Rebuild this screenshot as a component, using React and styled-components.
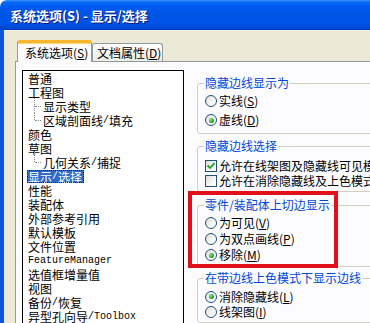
import React from "react";
import styled, { createGlobalStyle, css } from "styled-components";

const GlobalStyle = createGlobalStyle`
  html, body { margin: 0; padding: 0; background: #fff; }
  body {
    width: 370px; height: 323px; overflow: hidden;
    font-family: "Noto Sans CJK SC", "Noto Sans", sans-serif;
  }
  * { box-sizing: border-box; }
`;

const Window = styled.div`
  width: 370px;
  height: 323px;
  display: flex;
  flex-direction: column;
  overflow: hidden;
`;

const TitleBar = styled.div`
  height: 30px;
  flex: none;
  display: flex;
  align-items: center;
  padding-left: 10px;
  border-top-left-radius: 7px;
  background: linear-gradient(
    #3d95ff 0px, #0a6af8 2px, #005cf2 6px, #0054e3 14px,
    #0055e8 22px, #004ad9 27px, #0040c2 30px
  );
  color: #fff;
  font: bold 13px/1 "Noto Sans CJK SC", sans-serif;
  text-shadow: 1px 1px 0 #0a1883;
  white-space: nowrap;
`;

const Body = styled.div`
  flex: 1;
  min-height: 0;
  display: flex;
  flex-direction: column;
  background: #ece9d8;
  border-left: 4px solid #0b55e1;
  padding: 10px 0 0 11px;
`;

const TabStrip = styled.div`
  display: flex;
  align-items: flex-end;
  height: 22px;
  padding-left: 2px;
  margin-bottom: -1px;
  position: relative;
  z-index: 1;
  flex: none;
`;

const Tab = styled.div`
  display: flex;
  align-items: center;
  font-size: 12px;
  line-height: 14px;
  color: #000;
  white-space: nowrap;
  border: 1px solid #919b9c;
  border-bottom: none;
  border-radius: 3px 3px 0 0;
  ${(p) =>
    p.$active
      ? css`
          width: 75px;
          height: 22px;
          padding-left: 7px;
          background: #fcfcfe;
          border-top: 3px solid #f7b530;
          box-shadow: inset 0 1px 0 #ffd770;
        `
      : css`
          width: 71px;
          height: 18px;
          margin-bottom: 1px;
          padding-left: 4px;
          background: linear-gradient(#ffffff, #ecebe6);
        `}
`;

const Panel = styled.div`
  flex: 1;
  min-height: 0;
  display: flex;
  align-items: flex-start;
  gap: 13px;
  padding: 8px 0 0 6px;
  background: #fcfcfe;
  border-top: 1px solid #919b9c;
  border-left: 1px solid #919b9c;
`;

const Tree = styled.div`
  width: 162px;
  height: 300px;
  flex: none;
  border: 1px solid #000;
  background: #fff;
  font-size: 12px;
  color: #000;
`;

const TreeRow = styled.div`
  position: relative;
  height: 14px;
  display: flex;
  align-items: center;
  padding-left: ${(p) => (p.$level ? 19 : 4)}px;
  ${(p) =>
    p.$level &&
    css`
      &::before {
        content: "";
        position: absolute;
        left: 11px;
        top: ${p.$first ? -3 : 0}px;
        height: ${(p.$last ? 7 : 14) + (p.$first ? 3 : 0)}px;
        border-left: 1px dotted #8a8a8a;
      }
      &::after {
        content: "";
        position: absolute;
        left: 12px;
        top: 7px;
        width: 6px;
        border-top: 1px dotted #8a8a8a;
      }
    `}
`;

const TreeLabel = styled.span`
  display: flex;
  align-items: center;
  height: 13px;
  padding: 0 2px 0 1px;
  line-height: 13px;
  white-space: nowrap;
  ${(p) =>
    p.$selected &&
    css`
      background: #316ac5;
      color: #fff;
      outline: 1px dotted #0a246a;
      outline-offset: -1px;
    `}
`;

const Mono = styled.span`
  font-family: "Liberation Mono", "DejaVu Sans Mono", monospace;
  font-size: 10px;
`;

const RightColumn = styled.div`
  display: flex;
  flex-direction: column;
  flex: none;
  width: 240px;
`;

const Group = styled.fieldset`
  margin: ${(p) => p.$mt || 0}px 0 0 0;
  padding: ${(p) => p.$pt}px 0 ${(p) => p.$pb}px 6px;
  border: 1px solid #d0d0bf;
  border-radius: 3px;
  min-width: 0;
  width: 240px;
`;

const Legend = styled.legend`
  padding: 0 1px;
  font-size: 12px;
  line-height: 14px;
  color: #0046d5;
  white-space: nowrap;
`;

const Rows = styled.div`
  display: flex;
  flex-direction: column;
  gap: ${(p) => p.$gap || 0}px;
`;

const Option = styled.label`
  display: flex;
  align-items: center;
  gap: 2px;
  height: ${(p) => p.$h || 16}px;
  font-size: 12px;
  line-height: 14px;
  color: #000;
  white-space: nowrap;
`;

const RadioCircle = styled.span`
  width: 12px;
  height: 12px;
  margin-left: 1px;
  flex: none;
  border-radius: 50%;
  border: 1px solid #1c5180;
  background: linear-gradient(135deg, #dcdcd7, #ffffff 80%);
  display: flex;
  align-items: center;
  justify-content: center;
  &::after {
    content: "";
    display: ${(p) => (p.$checked ? "block" : "none")};
    width: 5px;
    height: 5px;
    border-radius: 50%;
    background: radial-gradient(circle at 35% 35%, #8ee08e, #21a121 60%, #1a8a1a);
  }
`;

const CheckBox = styled.span`
  width: 12px;
  height: 12px;
  margin-left: 1px;
  flex: none;
  border: 1px solid #1c5180;
  background: linear-gradient(135deg, #dcdcd7, #ffffff 80%);
  display: flex;
  align-items: center;
  justify-content: center;
`;

const Highlighted = styled.div`
  position: relative;
  margin-top: ${(p) => p.$mt}px;
`;

const RedMark = styled.div`
  position: absolute;
  left: -9px;
  top: -7px;
  width: 150px;
  height: 77px;
  border: 4px solid #e3101a;
  pointer-events: none;
`;

const Key = styled.u`
  text-decoration: underline;
`;

const renderLabel = (text) =>
  text.split(/([\x21-\x7e]+)/).map((part, i) =>
    /[\x21-\x7e]/.test(part) ? <Mono key={i}>{part}</Mono> : part
  );

const treeItems = [
  { label: "普通" },
  { label: "工程图" },
  { label: "显示类型", level: 1, first: true },
  { label: "区域剖面线/填充", level: 1, last: true },
  { label: "颜色" },
  { label: "草图" },
  { label: "几何关系/捕捉", level: 1, first: true, last: true },
  { label: "显示/选择", selected: true },
  { label: "性能" },
  { label: "装配体" },
  { label: "外部参考引用" },
  { label: "默认模板" },
  { label: "文件位置" },
  { label: "FeatureManager" },
  { label: "选值框增量值" },
  { label: "视图" },
  { label: "备份/恢复" },
  { label: "异型孔向导/Toolbox" },
];

const Radio = ({ checked, children, h }) => (
  <Option $h={h}>
    <RadioCircle $checked={checked} />
    <span>{children}</span>
  </Option>
);

const Check = ({ checked, children, h }) => (
  <Option $h={h}>
    <CheckBox>
      {checked && (
        <svg width="8" height="8" viewBox="0 0 8 8">
          <path d="M0.5 3.5 L3 6 L7.5 1.2" fill="none" stroke="#21a121" strokeWidth="1.8" />
        </svg>
      )}
    </CheckBox>
    <span>{children}</span>
  </Option>
);

export default function App() {
  return (
    <>
      <GlobalStyle />
      <Window>
        <TitleBar>系统选项(S) - 显示/选择</TitleBar>
        <Body>
          <TabStrip>
            <Tab $active>
              系统选项(<Key>S</Key>)
            </Tab>
            <Tab>
              文档属性(<Key>D</Key>)
            </Tab>
          </TabStrip>
          <Panel>
            <Tree>
              {treeItems.map((it) => (
                <TreeRow key={it.label} $level={it.level} $first={it.first} $last={it.last}>
                  <TreeLabel $selected={it.selected}>{renderLabel(it.label)}</TreeLabel>
                </TreeRow>
              ))}
            </Tree>
            <RightColumn>
              <Group $mt={6} $pt={3} $pb={5}>
                <Legend>隐藏边线显示为</Legend>
                <Rows $gap={3}>
                  <Radio>
                    实线(<Key>S</Key>)
                  </Radio>
                  <Radio checked>
                    虚线(<Key>D</Key>)
                  </Radio>
                </Rows>
              </Group>
              <Group $mt={5} $pt={5} $pb={3}>
                <Legend>隐藏边线选择</Legend>
                <Rows>
                  <Check checked h={15}>
                    允许在线架图及隐藏线可见模式下选择(<Key>A</Key>)
                  </Check>
                  <Check h={15}>
                    允许在消除隐藏线及上色模式下选择(<Key>B</Key>)
                  </Check>
                </Rows>
              </Group>
              <Highlighted $mt={6}>
                <Group $pt={3} $pb={3}>
                  <Legend>零件/装配体上切边显示</Legend>
                  <Rows>
                    <Radio>
                      为可见(<Key>V</Key>)
                    </Radio>
                    <Radio>
                      为双点画线(<Key>P</Key>)
                    </Radio>
                    <Radio checked>
                      移除(<Key>M</Key>)
                    </Radio>
                  </Rows>
                </Group>
                <RedMark />
              </Highlighted>
              <Group $mt={4} $pt={4} $pb={3}>
                <Legend>在带边线上色模式下显示边线</Legend>
                <Rows>
                  <Radio checked h={15}>
                    消除隐藏线(<Key>L</Key>)
                  </Radio>
                  <Radio h={15}>
                    线架图(<Key>I</Key>)
                  </Radio>
                </Rows>
              </Group>
            </RightColumn>
          </Panel>
        </Body>
      </Window>
    </>
  );
}
